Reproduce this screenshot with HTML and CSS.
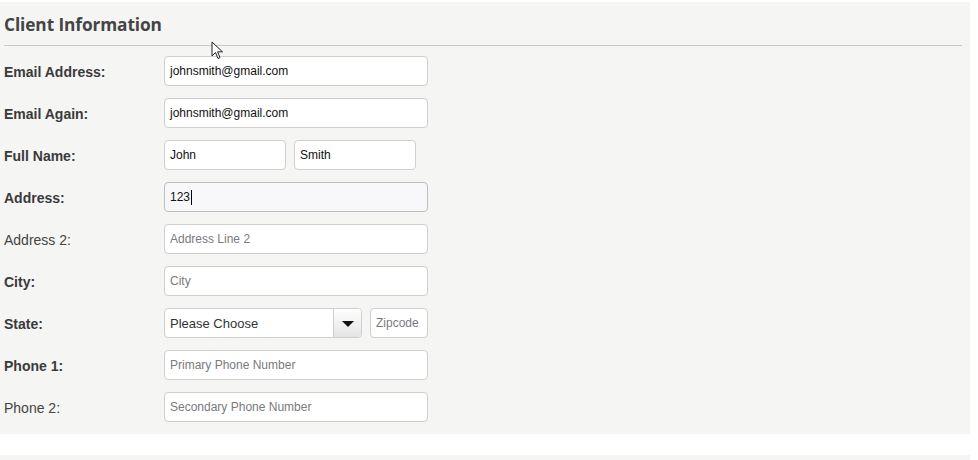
FILE: index.html
```html
<!DOCTYPE html>
<html>
<head>
<meta charset="utf-8">
<link rel="stylesheet" href="styles.css">
</head>
<body>
<div class="panel">
  <h2 class="title">Client Information</h2>
  <div class="rule"></div>
  <div class="form">
    <div class="row"><div class="label bold">Email Address:</div><div class="field"><div class="input wide">johnsmith@gmail.com</div></div></div>
    <div class="row"><div class="label bold">Email Again:</div><div class="field"><div class="input wide">johnsmith@gmail.com</div></div></div>
    <div class="row"><div class="label bold">Full Name:</div><div class="field"><div class="input half">John</div><div class="input half">Smith</div></div></div>
    <div class="row"><div class="label bold">Address:</div><div class="field"><div class="input wide focus">123<span class="caret"></span></div></div></div>
    <div class="row"><div class="label">Address 2:</div><div class="field"><div class="input wide ph">Address Line 2</div></div></div>
    <div class="row"><div class="label bold">City:</div><div class="field"><div class="input wide ph">City</div></div></div>
    <div class="row"><div class="label bold">State:</div><div class="field"><div class="select"><span class="sel-text">Please Choose</span><span class="sel-btn"><span class="tri"></span></span></div><div class="input zip ph">Zipcode</div></div></div>
    <div class="row"><div class="label bold">Phone 1:</div><div class="field"><div class="input wide ph">Primary Phone Number</div></div></div>
    <div class="row"><div class="label">Phone 2:</div><div class="field"><div class="input wide ph">Secondary Phone Number</div></div></div>
  </div>
  <svg class="cursor" width="14" height="20" viewBox="0 0 14 20"><path d="M1 1 L1 15 L4.5 11.5 L7 17.5 L9 16.6 L6.6 10.8 L11.5 10.8 Z" fill="#fff" stroke="#222" stroke-width="1"/></svg>
</div>
<div class="strip"></div>
</body>
</html>
```
FILE: styles.css
```css
html, body { margin: 0; padding: 0; background: #ffffff; }
body { width: 978px; height: 460px; overflow: hidden; font-family: "Liberation Sans", Arial, sans-serif; }
.panel {
  position: relative;
  margin-top: 2px;
  width: 970px;
  height: 432px;
  background: #f5f5f4;
  box-sizing: border-box;
}
.title {
  margin: 0;
  padding: 12px 0 0 4px;
  height: 31px;
  box-sizing: border-box;
  font-family: "Open Sans", "DejaVu Sans", sans-serif;
  font-weight: 700;
  font-size: 17.3px;
  line-height: 22px;
  color: #444;
  letter-spacing: -0.1px;
}
.rule {
  margin: 12px 0 0 4px;
  width: 958px;
  height: 1px;
  background: #c9c9cc;
}
.form {
  display: flex;
  flex-direction: column;
  gap: 12px;
  padding-top: 10px;
}
.row { display: flex; height: 30px; }
.label {
  width: 160px;
  box-sizing: border-box;
  padding-left: 4px;
  display: flex;
  align-items: center;
  padding-top: 2px;
  font-size: 14px;
  color: #444;
}
.label.bold { font-weight: 700; color: #3a3a3a; }
.field { display: flex; gap: 8px; padding-left: 4px; }
.input {
  height: 30px;
  box-sizing: border-box;
  border: 1px solid #cfcfcf;
  border-radius: 4px;
  background: #fff;
  padding-left: 5px;
  display: flex;
  align-items: center;
  font-size: 12px;
  color: #111;
}
.wide { width: 264px; }
.half { width: 122px; }
.zip { width: 58px; padding-left: 5px; }
.ph { color: #7a7a80; }
.focus { background: #f8f8fa; border-color: #bdbdc0; }
.caret { display: inline-block; width: 1px; height: 15px; background: #000; margin-left: 1px; }
.select {
  width: 198px;
  height: 30px;
  box-sizing: border-box;
  border: 1px solid #cfcfcf;
  border-radius: 4px;
  background: #fff;
  display: flex;
  overflow: hidden;
}
.sel-text {
  flex: 1;
  padding-left: 5px;
  display: flex;
  align-items: center;
  font-size: 13px;
  color: #333;
}
.sel-btn {
  width: 27px;
  border-left: 1px solid #cfcfcf;
  background: linear-gradient(#ffffff, #e4e4e4);
  display: flex;
  align-items: center;
  justify-content: center;
}
.tri {
  width: 0; height: 0;
  border-left: 6px solid transparent;
  border-right: 6px solid transparent;
  border-top: 6px solid #111;
  margin-top: 2px;
}
.cursor { position: absolute; left: 211px; top: 39px; }
.strip {
  margin-top: 21px;
  height: 5px;
  width: 970px;
  background: #f5f5f4;
}
```
